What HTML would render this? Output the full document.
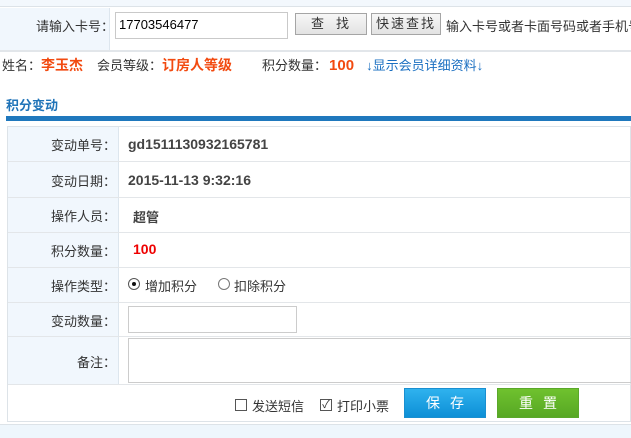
<!DOCTYPE html>
<html><head><meta charset="utf-8"><style>
*{margin:0;padding:0;box-sizing:border-box}
body{width:631px;height:438px;overflow:hidden;background:#fff;font-family:"Liberation Sans","Noto Sans CJK SC",sans-serif;font-size:13px;color:#333;position:relative}
.a{position:absolute}
</style></head><body>
<div class="a" style="left:0;top:0;width:631px;height:7px;background:#f3f8fd;border-bottom:1px solid #dde3e8"></div>
<div class="a" style="left:0;top:8px;width:110px;height:43px;background:#f1f7fd;border-right:1px solid #dde6ee"></div>
<div class="a" style="left:0;top:50px;width:631px;height:2px;background:#e2e6ea"></div>
<div class="a" style="left:36px;top:16px;color:#333">请输入卡号：</div>
<div class="a" style="left:115px;top:12px;width:173px;height:27px;border:1px solid #c9c9c9;background:#fff"></div>
<div class="a" style="left:119px;top:17px;color:#000">17703546477</div>
<div class="a" style="left:295px;top:13px;width:72px;height:22px;border:1px solid #a5a5a5;background:linear-gradient(#f7f7f7,#e3e3e3);text-align:center;line-height:20px;letter-spacing:12px;padding-left:10px">查找</div>
<div class="a" style="left:371px;top:13px;width:70px;height:22px;border:1px solid #a5a5a5;background:linear-gradient(#f7f7f7,#e3e3e3);text-align:center;line-height:20px;letter-spacing:2px">快速查找</div>
<div class="a" style="left:446px;top:16px;white-space:nowrap">输入卡号或者卡面号码或者手机号码</div>
<div class="a" style="left:2px;top:55px;white-space:nowrap">姓名：<b style="color:#f24a10;font-size:14px">李玉杰</b><span style="margin-left:14px">会员等级：</span><b style="color:#f24a10;font-size:14px">订房人等级</b><span style="margin-left:30px">积分数量：</span><b style="color:#f24a10;font-size:15px;margin-left:2px">100</b><span style="color:#1a6fc1;margin-left:12px">↓显示会员详细资料↓</span></div>
<div class="a" style="left:6px;top:95px;color:#1f73b8;font-weight:bold;font-size:13px">积分变动</div>
<div class="a" style="left:6px;top:116px;width:625px;height:5px;background:#1f78bd"></div>
<div class="a" style="left:7px;top:126px;width:624px;height:296px;border:1px solid #dde3e8"></div>
<div class="a" style="left:8px;top:127px;width:111px;height:258px;background:#f1f7fd;border-right:1px solid #dde6ee"></div>
<div class="a" style="left:8px;top:161px;width:623px;height:1px;background:#e3e6e9"></div>
<div class="a" style="left:8px;top:197px;width:623px;height:1px;background:#e3e6e9"></div>
<div class="a" style="left:8px;top:232px;width:623px;height:1px;background:#e3e6e9"></div>
<div class="a" style="left:8px;top:267px;width:623px;height:1px;background:#e3e6e9"></div>
<div class="a" style="left:8px;top:302px;width:623px;height:1px;background:#e3e6e9"></div>
<div class="a" style="left:8px;top:336px;width:623px;height:1px;background:#e3e6e9"></div>
<div class="a" style="left:8px;top:384px;width:623px;height:1px;background:#e3e6e9"></div>
<div class="a" style="left:8px;top:135px;width:108px;text-align:right">变动单号：</div>
<div class="a" style="left:8px;top:171px;width:108px;text-align:right">变动日期：</div>
<div class="a" style="left:8px;top:206px;width:108px;text-align:right">操作人员：</div>
<div class="a" style="left:8px;top:241px;width:108px;text-align:right">积分数量：</div>
<div class="a" style="left:8px;top:276px;width:108px;text-align:right">操作类型：</div>
<div class="a" style="left:8px;top:311px;width:108px;text-align:right">变动数量：</div>
<div class="a" style="left:8px;top:352px;width:108px;text-align:right">备注：</div>
<div class="a" style="left:128px;top:136px;font-weight:bold;font-size:14px;color:#444">gd1511130932165781</div>
<div class="a" style="left:128px;top:172px;font-weight:bold;font-size:14px;color:#444">2015-11-13 9:32:16</div>
<div class="a" style="left:133px;top:207px;font-weight:bold;color:#444">超管</div>
<div class="a" style="left:133px;top:241px;font-weight:bold;font-size:14px;color:#e00">100</div>
<div class="a" style="left:128px;top:278px;width:12px;height:12px;border:1px solid #555;border-radius:50%"><div style="position:absolute;left:3px;top:3px;width:4px;height:4px;border-radius:50%;background:#111"></div></div>
<div class="a" style="left:145px;top:276px">增加积分</div>
<div class="a" style="left:218px;top:278px;width:12px;height:12px;border:1px solid #777;border-radius:50%"></div>
<div class="a" style="left:234px;top:276px">扣除积分</div>
<div class="a" style="left:128px;top:306px;width:169px;height:27px;border:1px solid #ccc"></div>
<div class="a" style="left:128px;top:338px;width:503px;height:45px;border:1px solid #ccc;border-right:none"></div>
<div class="a" style="left:235px;top:399px;width:12px;height:12px;border:1px solid #555"></div>
<div class="a" style="left:252px;top:396px">发送短信</div>
<div class="a" style="left:320px;top:399px;width:12px;height:12px;border:1px solid #555;font-size:11px;line-height:10px;text-align:center">✓</div>
<div class="a" style="left:337px;top:396px">打印小票</div>
<div class="a" style="left:404px;top:388px;width:82px;height:30px;background:linear-gradient(#2fb2ee,#0d8fd6);border:1px solid #1a8fd0;color:#fff;text-align:center;line-height:28px;font-size:14px;letter-spacing:10px;padding-left:10px">保存</div>
<div class="a" style="left:497px;top:388px;width:82px;height:30px;background:linear-gradient(#6fc12e,#57a824);border:1px solid #5aa82a;color:#fff;text-align:center;line-height:28px;font-size:14px;letter-spacing:10px;padding-left:10px">重置</div>
<div class="a" style="left:0;top:424px;width:631px;height:14px;background:#eef6fc;border-top:1px solid #dde3e8"></div>
</body></html>
